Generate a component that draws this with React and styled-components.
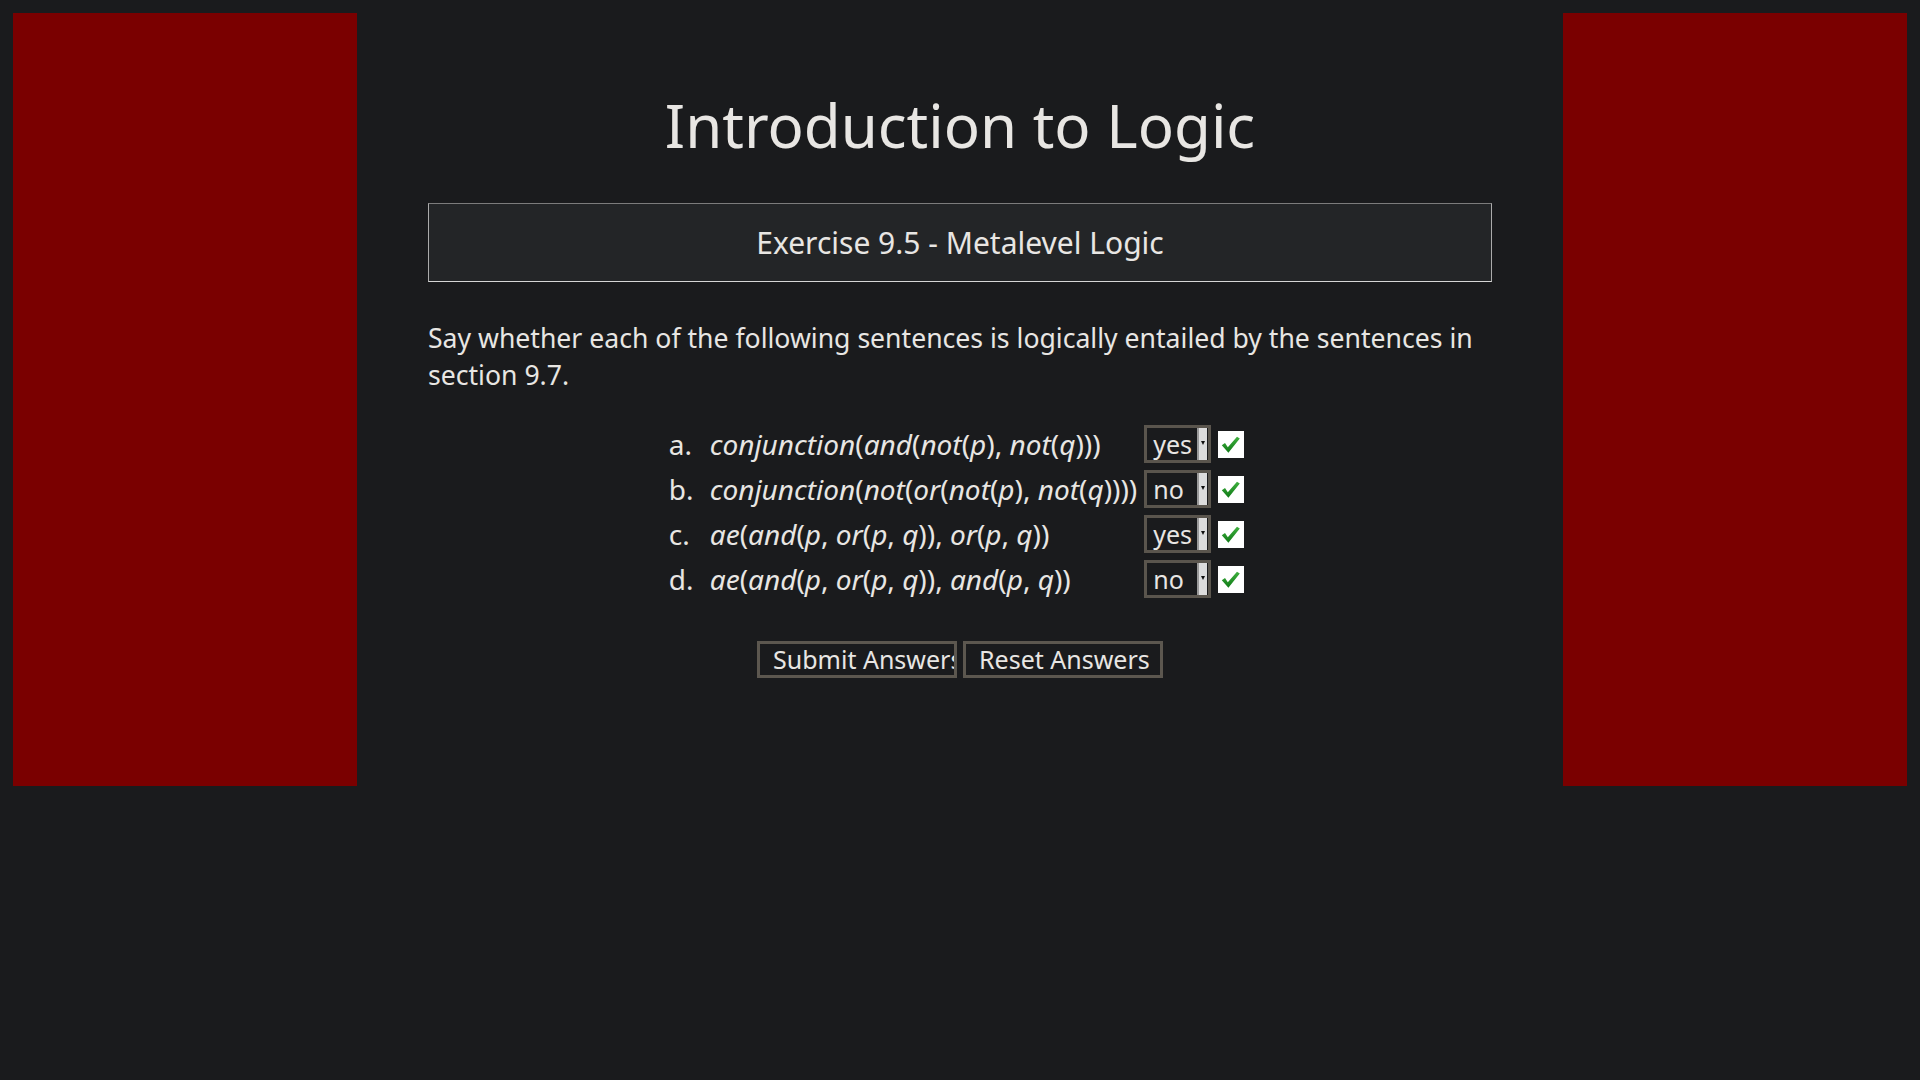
import React from "react";
import styled, { createGlobalStyle } from "styled-components";

const GlobalStyle = createGlobalStyle`
  html, body {
    margin: 0;
    padding: 0;
    background-color: #1a1b1d;
  }
  body {
    font-family: "Noto Sans", "Open Sans", sans-serif;
    color: #e8e6e3;
  }
`;

const Page = styled.div`
  display: grid;
  grid-template-columns: 344px 1fr 344px;
  padding: 13px;
  height: 773px;
`;

const SidePanel = styled.div`
  background-color: #7a0000;
`;

const Main = styled.main`
  padding: 77px 71px 0;
`;

const Title = styled.h1`
  margin: 0;
  font-size: 60px;
  font-weight: 400;
  line-height: 70px;
  text-align: center;
`;

const ExerciseBox = styled.div`
  margin-top: 43px;
  height: 79px;
  box-sizing: border-box;
  display: flex;
  align-items: center;
  justify-content: center;
  background-color: #232527;
  border: 1px solid #ababab;
  border-top-color: #7c7c7c;
  border-bottom-color: #d6d6d6;
  font-size: 30px;
`;

const Prompt = styled.p`
  margin: 38px 0 0;
  font-size: 26.6px;
  line-height: 37px;
`;

const Questions = styled.div`
  margin-top: 31px;
  padding-right: 7px;
  display: grid;
  grid-template-columns: 34px auto auto;
  column-gap: 7px;
  row-gap: 7px;
  justify-content: center;
  align-items: center;
  font-size: 28px;
`;

const Label = styled.span`
  line-height: 38px;
`;

const Expr = styled.span`
  line-height: 38px;
  white-space: nowrap;
`;

const Name = styled.i`
  font-style: italic;
`;

const Controls = styled.div`
  display: flex;
  align-items: center;
  gap: 7px;
`;

const Choice = styled.div`
  width: 67px;
  height: 38px;
  box-sizing: border-box;
  display: flex;
  border: 3px solid #5a554d;
  background-color: #1a1b1d;
`;

const ChoiceValue = styled.span`
  flex: 1;
  padding-left: 6px;
  font-size: 25px;
  line-height: 32px;
`;

const ChoiceArrow = styled.span`
  position: relative;
  width: 10px;
  margin-right: 1px;
  background-color: #dcdcdc;
  border-left: 2px solid #9a9a9a;
  box-sizing: border-box;

  &::after {
    content: "";
    position: absolute;
    left: 2px;
    top: 13px;
    border-left: 2px solid transparent;
    border-right: 2px solid transparent;
    border-top: 4px solid #111;
  }
`;

const Mark = styled.span`
  display: flex;
  width: 26px;
  height: 27px;
  background-color: #ffffff;
`;

const Buttons = styled.div`
  margin-top: 43px;
  display: flex;
  justify-content: center;
  gap: 6px;
`;

const Button = styled.button`
  width: 200px;
  height: 37px;
  padding: 0 0 0 13px;
  box-sizing: border-box;
  overflow: hidden;
  white-space: nowrap;
  text-align: left;
  background-color: #1a1b1d;
  color: #e8e6e3;
  border: 3px solid #5c574f;
  font-family: "Noto Sans", sans-serif;
  font-size: 25px;
  line-height: 31px;
  cursor: pointer;
`;

const questions = [
  { label: "a.", text: "conjunction(and(not(p), not(q)))", answer: "yes" },
  { label: "b.", text: "conjunction(not(or(not(p), not(q))))", answer: "no" },
  { label: "c.", text: "ae(and(p, or(p, q)), or(p, q))", answer: "yes" },
  { label: "d.", text: "ae(and(p, or(p, q)), and(p, q))", answer: "no" },
];

function Formula({ text }) {
  return text
    .split(/([a-z]+)/)
    .map((part, i) =>
      /^[a-z]+$/.test(part) ? <Name key={i}>{part}</Name> : part
    );
}

function CheckMark() {
  return (
    <Mark>
      <svg width="26" height="27" viewBox="0 0 26 27">
        <defs>
          <linearGradient id="chk" x1="0" y1="0" x2="0" y2="1">
            <stop offset="0" stopColor="#3fb03f" />
            <stop offset="1" stopColor="#107a16" />
          </linearGradient>
        </defs>
        <path
          d="M3.8 14.2 L7 12 L9.8 16.3 L19 5.8 L21.8 7.6 L10.4 21.8 Z"
          fill="url(#chk)"
        />
      </svg>
    </Mark>
  );
}

export default function App() {
  return (
    <>
      <GlobalStyle />
      <Page>
        <SidePanel />
        <Main>
          <Title>Introduction to Logic</Title>
          <ExerciseBox>Exercise 9.5 - Metalevel Logic</ExerciseBox>
          <Prompt>
            Say whether each of the following sentences is logically entailed
            by the sentences in section 9.7.
          </Prompt>
          <Questions>
            {questions.map((q) => (
              <React.Fragment key={q.label}>
                <Label>{q.label}</Label>
                <Expr>
                  <Formula text={q.text} />
                </Expr>
                <Controls>
                  <Choice>
                    <ChoiceValue>{q.answer}</ChoiceValue>
                    <ChoiceArrow />
                  </Choice>
                  <CheckMark />
                </Controls>
              </React.Fragment>
            ))}
          </Questions>
          <Buttons>
            <Button>Submit Answers</Button>
            <Button>Reset Answers</Button>
          </Buttons>
        </Main>
        <SidePanel />
      </Page>
    </>
  );
}
